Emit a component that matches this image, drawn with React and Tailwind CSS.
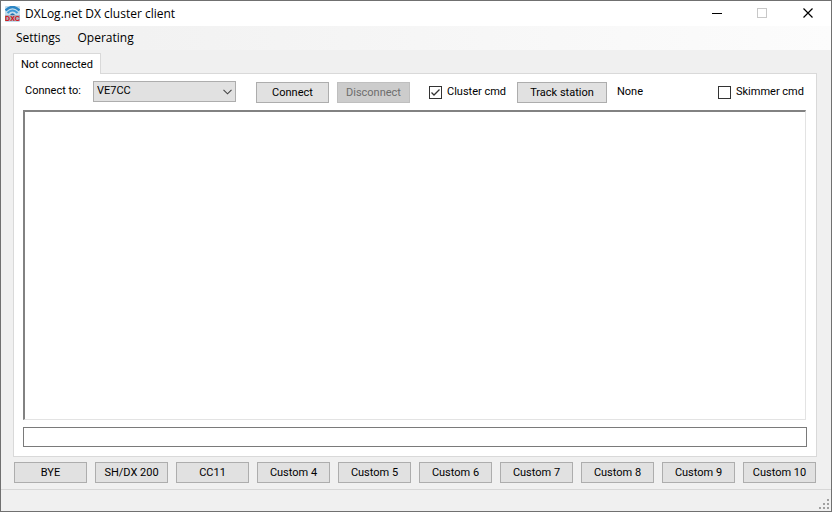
import React, { useState } from "react";

const clusters = ["VE7CC", "DXSpots", "Custom"];
const commands = ["BYE", "SH/DX 200", "CC11", "Custom 4", "Custom 5", "Custom 6", "Custom 7", "Custom 8", "Custom 9", "Custom 10"];

function AppIcon() {
  return (
    <svg className="h-4 w-[15px]" viewBox="0 0 15 16" aria-hidden="true">
      <rect x="0" y="0" width="15" height="16" rx="1" fill="#c3dcec" />
      <path d="M.5 4.500Q7.500 -2.500 14.500 4.500" fill="none" stroke="#2b86c5" strokeWidth="2.400" />
      <path d="M2.500 7Q7.500 2 12.500 7" fill="none" stroke="#3f9ad6" strokeWidth="2" />
      <path d="M5 9Q7.500 5.500 10 9Z" fill="#1d6fae" />
      <rect x="0" y="9" width="15" height="6" fill="#a9b1bb" />
      <text x="7.500" y="15" textAnchor="middle" fill="#d80a12" className="font-['Liberation_Sans',sans-serif] text-[7px] font-bold">DXC</text>
    </svg>
  );
}

function TitleBar() {
  return (
    <header className="flex h-[25px] items-center bg-white pl-1 font-['Open_Sans','Noto_Sans',sans-serif] text-[12px]">
      <AppIcon />
      <h1 className="ml-[5px] flex-1">DXLog.net DX cluster client</h1>
      <button aria-label="Minimize" className="grid h-full w-[46px] place-items-center">
        <svg width="11" height="11" viewBox="0 0 11 11" shapeRendering="crispEdges">
          <path d="M1 5.500H11" stroke="#000" />
        </svg>
      </button>
      <button aria-label="Maximize" disabled className="grid h-full w-[46px] place-items-center">
        <svg width="11" height="11" viewBox="0 0 11 11" shapeRendering="crispEdges">
          <path d="M.5 .5H9.500V9.500H.5Z" fill="none" stroke="#c8c8c8" />
        </svg>
      </button>
      <button aria-label="Close" className="grid h-full w-[46px] place-items-center">
        <svg width="11" height="11" viewBox="0 0 11 11">
          <path d="M.5 .5L9.500 9.500M9.500 .5L.5 9.500" stroke="#000" strokeWidth="1.200" />
        </svg>
      </button>
    </header>
  );
}

function PushButton({ className = "", ...props }) {
  return (
    <button
      className={`h-[21px] border border-[#adadad] bg-[#e1e1e1] leading-[20px] disabled:border-[#bfbfbf] disabled:bg-[#cccccc] disabled:text-[#6d6d6d] ${className}`}
      {...props}
    />
  );
}

function CheckBox({ label, checked, onChange }) {
  return (
    <label className="flex items-center gap-[5px] whitespace-nowrap">
      <span className="grid size-[13px]">
        <input
          type="checkbox"
          checked={checked}
          onChange={(e) => onChange(e.target.checked)}
          className="col-start-1 row-start-1 size-[13px] appearance-none border border-[#333] bg-white"
        />
        {checked && (
          <svg className="pointer-events-none col-start-1 row-start-1" width="13" height="13" viewBox="0 0 13 13">
            <path d="M2.500 6.500L5 9L10.500 3.500" fill="none" stroke="#333" strokeWidth="1.300" />
          </svg>
        )}
      </span>
      {label}
    </label>
  );
}

function SizeGrip() {
  const dots = [[8, 0], [4, 4], [8, 4], [0, 8], [4, 8], [8, 8]];
  return (
    <svg width="10" height="10" viewBox="0 0 10 10" shapeRendering="crispEdges" aria-hidden="true">
      {dots.map(([x, y]) => (
        <rect key={`${x}-${y}`} x={x} y={y} width="2" height="2" fill="#a0a0a0" />
      ))}
    </svg>
  );
}

export default function App() {
  const [cluster, setCluster] = useState("VE7CC");
  const [clusterCmd, setClusterCmd] = useState(true);
  const [skimmerCmd, setSkimmerCmd] = useState(false);
  const [command, setCommand] = useState("");

  return (
    <div className="flex min-h-screen flex-col border border-[#707070] bg-[#f0f0f0] font-[Roboto,'Liberation_Sans',sans-serif] text-[11px] text-black">
      <TitleBar />
      <nav className="flex h-6 items-center gap-[17px] bg-linear-to-r from-[#f0f0f0] to-[#fcfcfc] px-[15px] font-['Open_Sans','Noto_Sans',sans-serif] text-[12px]">
        <button>Settings</button>
        <button>Operating</button>
      </nav>

      <main className="flex flex-1 flex-col px-3 pt-[3px]">
        <div role="tablist" className="flex">
          <button
            role="tab"
            aria-selected="true"
            className="z-10 -mb-px h-[21px] border border-b-0 border-[#d9d9d9] bg-white px-[7px] leading-[19px]"
          >
            Not connected
          </button>
        </div>
        <section className="mr-[2px] flex flex-1 flex-col border border-[#d9d9d9] bg-white px-[9px] pb-[9px]">
          <div className="flex h-9 items-start pt-[7px]">
            <div className="flex items-center">
              <label htmlFor="cluster" className="w-[70px] pl-[2px] whitespace-nowrap">Connect to:</label>
              <div className="grid w-[143px]">
                <select
                  id="cluster"
                  value={cluster}
                  onChange={(e) => setCluster(e.target.value)}
                  className="col-start-1 row-start-1 h-[21px] w-full appearance-none border border-[#adadad] bg-[#e1e1e1] pl-[3px]"
                >
                  {clusters.map((name) => (
                    <option key={name}>{name}</option>
                  ))}
                </select>
                <svg
                  className="pointer-events-none col-start-1 row-start-1 mr-1 self-center justify-self-end"
                  width="9"
                  height="6"
                  viewBox="0 0 9 6"
                >
                  <path d="M.5 .8L4.500 4.800L8.500 .8" fill="none" stroke="#444" strokeWidth="1.100" />
                </svg>
              </div>
            </div>
            <div className="flex flex-1 items-center pt-px">
              <PushButton className="ml-5 w-[73px]">Connect</PushButton>
              <PushButton className="ml-2 w-[73px]" disabled>Disconnect</PushButton>
              <div className="ml-[19px] w-[88px]">
                <CheckBox label="Cluster cmd" checked={clusterCmd} onChange={setClusterCmd} />
              </div>
              <PushButton className="w-[90px]">Track station</PushButton>
              <span className="ml-[10px] flex-1">None</span>
              <div className="w-[89px]">
                <CheckBox label="Skimmer cmd" checked={skimmerCmd} onChange={setSkimmerCmd} />
              </div>
            </div>
          </div>
          <textarea
            readOnly
            aria-label="Cluster output"
            className="mr-px flex-1 resize-none border-2 border-r border-b border-t-[#828282] border-r-[#e3e3e3] border-b-[#e3e3e3] border-l-[#828282] bg-white outline-none"
          />
          <input
            aria-label="Command"
            value={command}
            onChange={(e) => setCommand(e.target.value)}
            className="mt-[7px] h-5 w-full border border-[#7a7a7a] bg-white px-1 outline-none"
          />
        </section>
        <div className="mt-[5px] mr-[3px] mb-[6px] ml-px flex gap-2">
          {commands.map((name) => (
            <PushButton key={name} className="flex-1 whitespace-nowrap">{name}</PushButton>
          ))}
        </div>
      </main>

      <footer className="flex h-[22px] items-end justify-end border-t border-[#d7d7d7] pr-[2px] pb-[2px]">
        <SizeGrip />
      </footer>
    </div>
  );
}
